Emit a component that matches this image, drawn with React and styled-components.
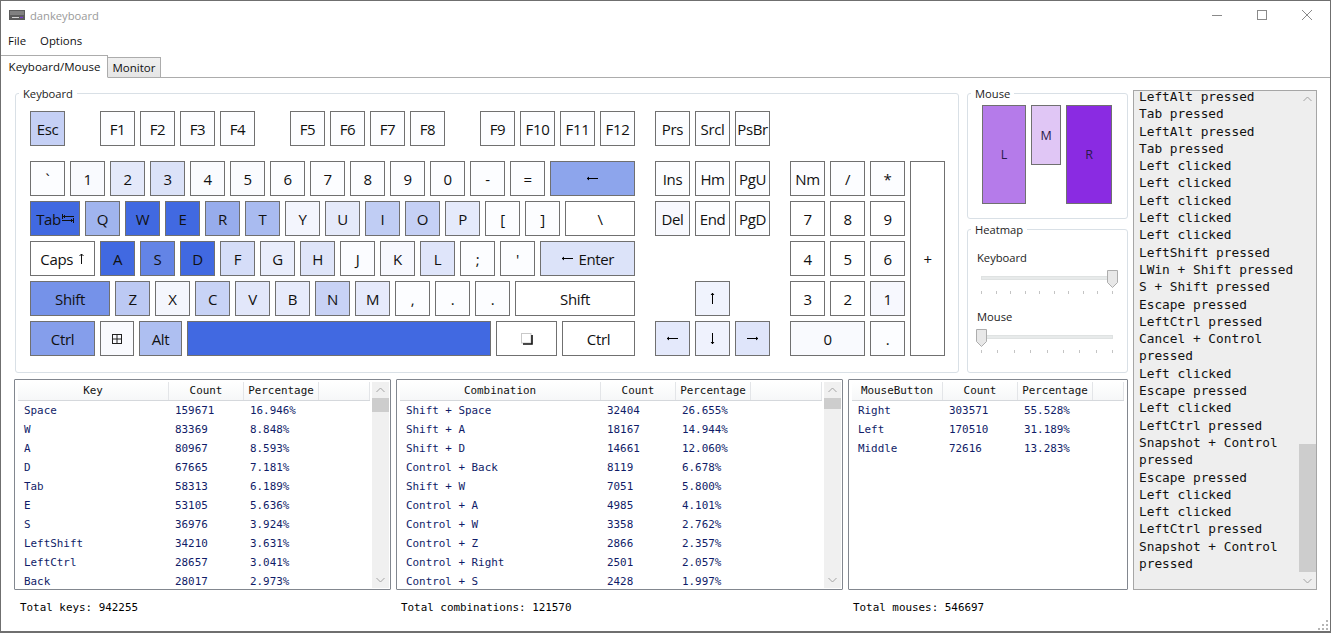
import React from 'react';
import styled, { createGlobalStyle } from 'styled-components';

const UI = '"Open Sans", "DejaVu Sans", sans-serif';
const MONO = '"DejaVu Sans Mono", "Liberation Mono", monospace';

const Global = createGlobalStyle`
  html, body { margin: 0; padding: 0; background: #fff; overflow: hidden; }
  * { box-sizing: border-box; }
`;

const Window = styled.div`
  width: 1331px; height: 633px; background: #fff; position: relative; overflow: hidden;
  border: 1px solid #6f6f6f; border-bottom-width: 2px;
  font-family: ${UI}; color: #111; display: flex; flex-direction: column;
`;
const TitleBar = styled.div`
  height: 29px; flex: none; display: flex; align-items: center; padding: 0 0 1px 8px; gap: 5px;
`;
const Title = styled.span`font-size: 11.2px; color: #9a9a9a;`;
const WinButtons = styled.div`margin-left: auto; display: flex; gap: 35px; padding: 0 18px 1px 0; align-items: center;`;
const MenuBar = styled.div`height: 25px; flex: none; display: flex; gap: 14px; padding: 0 0 5px 7px; align-items: center; font-size: 11.4px;`;
const TabStrip = styled.div`height: 23px; flex: none; display: flex; align-items: flex-end; border-bottom: 1px solid #acacac; padding-left: 0;`;
const Tab = styled.div`
  display: flex; align-items: center; justify-content: center; font-size: 11.5px;
  border: 1px solid #acacac; border-bottom: ${p => p.$active ? '1px solid #fff' : '0'};
  border-left: 0;
  height: ${p => p.$active ? '23px' : '20px'};
  width: ${p => p.$active ? '107px' : '53px'};
  padding-left: ${p => p.$active ? '1px' : '0'};
  background: ${p => p.$active ? '#fff' : 'linear-gradient(#f0f0f0,#e5e5e5)'};
  margin-bottom: ${p => p.$active ? '-1px' : '0'};
`;
const Content = styled.div`flex: 1; display: flex; gap: 5px; padding: 12px 0 0 13px; min-height: 0;`;
const LeftCol = styled.div`width: 1114px; display: flex; flex-direction: column;`;
const TopRow = styled.div`display: flex; gap: 8px; padding: 3px 0 0 1px; height: 289px;`;

const Group = styled.div`
  position: relative; border: 1px solid #d9e0e6; border-radius: 3px;
  width: ${p => p.$w}px; height: ${p => p.$h}px; padding: ${p => p.$pad};
`;
const Legend = styled.span`
  position: absolute; left: 3px; top: -8px; background: #fff; padding: 0 4px; font-size: 11.2px; line-height: 15px; color: #222;
`;
const SideCol = styled.div`display: flex; flex-direction: column; gap: 10px;`;

const KeyboardBody = styled.div`display: flex; gap: 20px;`;
const KeyBlock = styled.div`display: flex; flex-direction: column; gap: 5px;`;
const KeyRow = styled.div`display: flex; gap: 5px; height: 35px; margin-bottom: ${p => p.$mb || 0}px;`;
const Key = styled.div`
  width: ${p => p.$w || 35}px; height: 35px; flex: none; margin-left: ${p => p.$ml || 0}px;
  background: ${p => p.$bg || '#fcfdff'}; border: 1px solid #707070;
  display: flex; align-items: center; justify-content: center; white-space: nowrap;
  font-size: 15px; letter-spacing: -0.35px; color: #111; gap: 1px;
`;
const Numpad = styled.div`
  margin-top: 50px; display: grid; grid-template-columns: repeat(4, 35px); grid-auto-rows: 35px; gap: 5px;
`;
const PadKey = styled(Key)`
  width: auto; height: auto; margin: 0;
  grid-column: span ${p => p.$cs || 1}; grid-row: span ${p => p.$rs || 1};
`;

const MouseRow = styled.div`display: flex; gap: 5px; align-items: flex-start;`;
const MouseBtn = styled.div`
  width: ${p => p.$w}px; height: ${p => p.$h}px; background: ${p => p.$bg}; border: 1px solid #707070;
  display: flex; align-items: center; justify-content: center; font-size: 12.5px; color: #2a1a4a;
`;

const SliderBlock = styled.div`display: flex; flex-direction: column;`;
const SliderLabel = styled.div`font-size: 11.2px; line-height: 16px; color: #222;`;
const Track = styled.div`
  position: relative; width: 132px; height: 4px; margin: 10px 0 0 4px; background: #e7eaea; border: 1px solid #dfe2e2;
`;
const Thumb = styled.svg`position: absolute; top: -7px; ${p => p.$end ? 'right: -6px' : 'left: -6px'};`;
const Ticks = styled.div`display: flex; justify-content: space-between; width: 132px; margin: 11px 0 0 4px;`;
const Tick = styled.i`width: 1px; height: 3px; background: #c4c4c4; display: block;`;
const SpacerSlider = styled.div`margin-top: 15px;`;

const TablesRow = styled.div`display: flex; gap: 5px; margin-top: 0; height: 211px;`;
const TableBox = styled.div`
  width: ${p => p.$w}px; height: 211px; flex: none; border: 1px solid #82878f; border-radius: 1px;
  padding: 2px 1px 1px 3px; display: flex; gap: 2px; overflow: hidden;
`;
const TableMain = styled.div`flex: 1; min-width: 0; overflow: hidden; display: flex; flex-direction: column;`;
const HeaderRow = styled.div`
  display: grid; grid-template-columns: ${p => p.$cols}; height: 19px; flex: none; margin-right: ${p => p.$mr || 0}px;
  border-bottom: 1px solid #d5d8dc; background: linear-gradient(#fff, #f6f7f8);
`;
const HeaderCell = styled.div`
  font-family: ${MONO}; font-size: 10.9px; line-height: 17px; color: #111; text-align: center;
  border-right: 1px solid #e3e5e8;
`;
const Row = styled.div`display: grid; grid-template-columns: ${p => p.$cols}; height: 19px; flex: none;`;
const Cell = styled.div`
  font-family: ${MONO}; font-size: 10.9px; line-height: 19px; color: #101c68; padding-left: 6px; white-space: nowrap;
`;
const ScrollBar = styled.div`
  width: 17px; flex: none; background: ${p => p.$bg || '#f0f0f0'}; display: flex; flex-direction: column; align-items: stretch;
`;
const ScrollArrow = styled.div`height: 16px; flex: none; display: flex; align-items: center; justify-content: center; margin-top: ${p => p.$auto ? 'auto' : '0'};`;
const ScrollThumb = styled.div`height: ${p => p.$h}px; margin-top: ${p => p.$off || 0}px; background: #cdcdcd; flex: none;`;

const Totals = styled.div`display: flex; height: 26px; margin-top: 4px; align-items: center;`;
const Total = styled.div`
  width: ${p => p.$w}px; padding-left: ${p => p.$pl}px; flex: none;
  font-family: ${MONO}; font-size: 10.9px; color: #000;
`;

const LogPanel = styled.div`
  width: 184px; height: 500px; background: #eeeeee; border: 1px solid #a6a6a6; display: flex; overflow: hidden;
`;
const LogText = styled.div`
  flex: 1; min-width: 0; padding: 0 0 0 5px; margin-top: -3px; height: 520px;
  font-family: ${MONO}; font-size: 12.8px; line-height: 17.3px; color: #111;
`;
const LogLine = styled.div``;
const Grip = styled.svg`position: absolute; right: 1px; bottom: 0;`;

const Chevron = ({ up }) => (
  <svg width="9" height="6" viewBox="0 0 9 6"><path d={up ? 'M.5 5 4.5 1l4 4' : 'M.5 1l4 4 4-4'} fill="none" stroke="#a3a3a3" strokeWidth="1" /></svg>
);
const Bar = ({ thumb, off = 0, bg }) => (
  <ScrollBar $bg={bg}>
    <ScrollArrow><Chevron up /></ScrollArrow>
    <ScrollThumb $h={thumb} $off={off} />
    <ScrollArrow $auto><Chevron /></ScrollArrow>
  </ScrollBar>
);

const TabIcon = () => (
  <svg width="12" height="9" viewBox="0 0 12 9" fill="none" stroke="#111" strokeWidth="1">
    <path d="M0 2.5h12M.5 0v5M3 1 1.5 2.5 3 4" />
    <path d="M0 6.5h12M11.5 4v5M9 5l1.5 1.5L9 8" />
  </svg>
);
const CapsArrow = () => (
  <svg width="7" height="11" viewBox="0 0 7 11" fill="none" stroke="#111" strokeWidth="1"><path d="M3.5 11V1M1.5 3l2-2 2 2" /></svg>
);
const Arrow = ({ dir }) => {
  const rot = { l: 0, u: 90, r: 180, d: 270 }[dir];
  return (
    <svg width="13" height="13" viewBox="0 0 13 13" fill="none" stroke="#000" strokeWidth="1">
      <path transform={`rotate(${rot} 6.5 6.5)`} d="M1 6.5h11M3 5 1.2 6.5 3 8" />
    </svg>
  );
};
const WinIcon = () => (
  <svg width="10" height="10" viewBox="0 0 10 10" fill="none" stroke="#222" strokeWidth="1">
    <rect x=".5" y=".5" width="9" height="9" /><path d="M5 0v10M0 5h10" />
  </svg>
);
const MenuIcon = () => (
  <svg width="12" height="12" viewBox="0 0 12 12">
    <rect x=".5" y=".5" width="9.5" height="9.5" fill="#fff" stroke="#c9c9c9" />
    <path d="M11 2v9H2" fill="none" stroke="#111" strokeWidth="1.6" />
  </svg>
);
const KbIcon = () => (
  <svg width="16" height="10" viewBox="0 0 16 10">
    <rect width="16" height="10" fill="#5c5c5c" />
    <path d="M1 2h14M1 4h14" stroke="#b9b9b9" strokeWidth=".8" />
    <path d="M3 7.5h7" stroke="#d5d5d5" strokeWidth="1" />
    <path d="M11 7.5h3" stroke="#7a3fd0" strokeWidth="1.2" />
  </svg>
);

const R = 'royalblue';
const fnRow = [
  ['Esc', 35, '#c5d0f5', 0],
  ['F1', 35, 0, 30], ['F2'], ['F3'], ['F4'],
  ['F5', 35, 0, 30], ['F6'], ['F7'], ['F8'],
  ['F9', 35, 0, 30], ['F10'], ['F11'], ['F12'],
];
const rows = [
  [['`'], ['1', 35, '#f9fafe'], ['2', 35, '#e4e9fa'], ['3', 35, '#dbe2f8'], ['4', 35, '#fafbfe'], ['5', 35, '#fafbfe'], ['6'], ['7'], ['8'], ['9'], ['0'], ['-'], ['='], [<Arrow dir="l" />, 85, '#8da5ec']],
  [[<>Tab<TabIcon /></>, 50, '#4169e1'], ['Q', 35, '#a0b4ee'], ['W', 35, R], ['E', 35, R], ['R', 35, '#97acec'], ['T', 35, '#a9bbf0'], ['Y', 35, '#f3f5fd'], ['U', 35, '#e5eafa'], ['I', 35, '#c0cdf4'], ['O', 35, '#c5d0f5'], ['P', 35, '#e5eafb'], ['['], [']'], ['\\', 70, '#fff']],
  [[<>Caps&nbsp;<CapsArrow /></>, 65, '#fff'], ['A', 35, R], ['S', 35, '#6384e6'], ['D', 35, R], ['F', 35, '#d5ddf8'], ['G', 35, '#e9edfb'], ['H', 35, '#dfe5f9'], ['J', 35, '#fbfcff'], ['K', 35, '#f7f8fe'], ['L', 35, '#dfe5fa'], [';'], ["'"], [<><Arrow dir="l" />&nbsp;Enter</>, 95, '#dce3f9']],
  [['Shift', 80, '#7592e9'], ['Z', 35, '#bcc9f3'], ['X', 35, '#f4f6fd'], ['C', 35, '#c8d3f6'], ['V', 35, '#e2e7fa'], ['B', 35, '#e7ebfb'], ['N', 35, '#c8d2f5'], ['M', 35, '#e6eafb'], [','], ['.'], ['.'], ['Shift', 120, '#fff']],
  [['Ctrl', 65, '#859eeb'], [<WinIcon />, 34, '#f9fafe'], ['Alt', 43, '#aebff1'], ['', 304, R], [<MenuIcon />, 61, '#fff'], ['Ctrl', 73, '#fff']],
];

const renderKeys = list => list.map((k, i) => (
  <Key key={i} $w={k[1]} $bg={k[2] || undefined} $ml={k[3]}>{k[0]}</Key>
));

const padKeys = [
  ['Nm', 1, 1, '#fdfdff'], ['/'], ['*'], ['+', 1, 5, '#fff'],
  ['7', 1, 1, '#fff'], ['8', 1, 1, '#fff'], ['9', 1, 1, '#fff'],
  ['4', 1, 1, '#fff'], ['5', 1, 1, '#fff'], ['6', 1, 1, '#fdfdff'],
  ['3', 1, 1, '#fff'], ['2', 1, 1, '#fff'], ['1', 1, 1, '#f7f8fe'],
  ['0', 2, 1, '#f9fafe'], ['.'],
];

const keyData = [
  ['Space', '159671', '16.946%'], ['W', '83369', '8.848%'], ['A', '80967', '8.593%'], ['D', '67665', '7.181%'],
  ['Tab', '58313', '6.189%'], ['E', '53105', '5.636%'], ['S', '36976', '3.924%'], ['LeftShift', '34210', '3.631%'],
  ['LeftCtrl', '28657', '3.041%'], ['Back', '28017', '2.973%'],
];
const comboData = [
  ['Shift + Space', '32404', '26.655%'], ['Shift + A', '18167', '14.944%'], ['Shift + D', '14661', '12.060%'],
  ['Control + Back', '8119', '6.678%'], ['Shift + W', '7051', '5.800%'], ['Control + A', '4985', '4.101%'],
  ['Control + W', '3358', '2.762%'], ['Control + Z', '2866', '2.357%'], ['Control + Right', '2501', '2.057%'],
  ['Control + S', '2428', '1.997%'],
];
const mouseData = [
  ['Right', '303571', '55.528%'], ['Left', '170510', '31.189%'], ['Middle', '72616', '13.283%'],
];
const logData = [
  'LeftAlt pressed', 'Tab pressed', 'LeftAlt pressed', 'Tab pressed', 'Left clicked', 'Left clicked', 'Left clicked',
  'Left clicked', 'Left clicked', 'LeftShift pressed', 'LWin + Shift pressed', 'S + Shift pressed', 'Escape pressed',
  'LeftCtrl pressed', 'Cancel + Control pressed', 'Left clicked', 'Escape pressed', 'Left clicked', 'LeftCtrl pressed',
  'Snapshot + Control pressed', 'Escape pressed', 'Left clicked', 'Left clicked', 'LeftCtrl pressed',
  'Snapshot + Control pressed',
];

const DataTable = ({ w, cols, heads, data, thumb, fill }) => (
  <TableBox $w={w}>
    <TableMain>
      <HeaderRow $cols={cols + ' 1fr'} $mr={fill}>
        {heads.map(h => <HeaderCell key={h}>{h}</HeaderCell>)}
      </HeaderRow>
      {data.map(r => (
        <Row key={r[0]} $cols={cols}>
          {r.map((c, i) => <Cell key={i}>{c}</Cell>)}
        </Row>
      ))}
    </TableMain>
    {thumb ? <Bar thumb={thumb} /> : null}
  </TableBox>
);

const SliderThumb = ({ end }) => (
  <Thumb $end={end} width="11" height="18" viewBox="0 0 11 18">
    <path d="M.5.5h10v12l-5 5-5-5z" fill="#e8e8e8" stroke="#adadad" />
  </Thumb>
);
const Slider = ({ label, end, ticks }) => (
  <SliderBlock>
    <SliderLabel>{label}</SliderLabel>
    <Track><SliderThumb end={end} /></Track>
    <Ticks>{Array.from({ length: ticks }, (_, i) => <Tick key={i} />)}</Ticks>
  </SliderBlock>
);

export default function App() {
  return (
    <Window>
      <Global />
      <TitleBar>
        <KbIcon />
        <Title>dankeyboard</Title>
        <WinButtons>
          <svg width="10" height="10" viewBox="0 0 10 10"><path d="M0 5.5h10" stroke="#8a8a8a" /></svg>
          <svg width="10" height="10" viewBox="0 0 10 10"><rect x=".5" y=".5" width="9" height="9" fill="none" stroke="#8a8a8a" /></svg>
          <svg width="10" height="10" viewBox="0 0 10 10"><path d="M0 0l10 10M10 0 0 10" stroke="#8a8a8a" /></svg>
        </WinButtons>
      </TitleBar>
      <MenuBar><span>File</span><span>Options</span></MenuBar>
      <TabStrip>
        <Tab $active>Keyboard/Mouse</Tab>
        <Tab>Monitor</Tab>
      </TabStrip>
      <Content>
        <LeftCol>
          <TopRow>
            <Group $w={944} $h={280} $pad="17px 0 0 14px">
              <Legend>Keyboard</Legend>
              <KeyboardBody>
                <KeyBlock>
                  <KeyRow $mb={10}>{renderKeys(fnRow)}</KeyRow>
                  {rows.map((r, i) => <KeyRow key={i}>{renderKeys(r)}</KeyRow>)}
                </KeyBlock>
                <KeyBlock>
                  <KeyRow $mb={10}>{renderKeys([['Prs'], ['Srcl'], ['PsBr']])}</KeyRow>
                  <KeyRow>{renderKeys([['Ins'], ['Hm'], ['PgU']])}</KeyRow>
                  <KeyRow>{renderKeys([['Del', 35, '#f8f9fe'], ['End'], ['PgD']])}</KeyRow>
                  <KeyRow />
                  <KeyRow>{renderKeys([[<Arrow dir="u" />, 35, '#f0f3fd', 40]])}</KeyRow>
                  <KeyRow>{renderKeys([[<Arrow dir="l" />, 35, '#e4e9fb'], [<Arrow dir="d" />, 35, '#eff2fd'], [<Arrow dir="r" />, 35, '#dfe5fa']])}</KeyRow>
                </KeyBlock>
                <Numpad>
                  {padKeys.map((k, i) => <PadKey key={i} $cs={k[1]} $rs={k[2]} $bg={k[3]}>{k[0]}</PadKey>)}
                </Numpad>
              </KeyboardBody>
            </Group>
            <SideCol>
              <Group $w={161} $h={126} $pad="11px 0 0 14px">
                <Legend>Mouse</Legend>
                <MouseRow>
                  <MouseBtn $w={44} $h={99} $bg="#b57bea">L</MouseBtn>
                  <MouseBtn $w={30} $h={60} $bg="#e0c6f5">M</MouseBtn>
                  <MouseBtn $w={46} $h={99} $bg="#8a2be2">R</MouseBtn>
                </MouseRow>
              </Group>
              <Group $w={161} $h={144} $pad="20px 0 0 9px">
                <Legend>Heatmap</Legend>
                <Slider label="Keyboard" end ticks={10} />
                <SpacerSlider><Slider label="Mouse" ticks={9} /></SpacerSlider>
              </Group>
            </SideCol>
          </TopRow>
          <TablesRow>
            <DataTable w={377} cols="151px 75px 75px" heads={['Key', 'Count', 'Percentage', '']} data={keyData} thumb={14} />
            <DataTable w={447} cols="201px 75px 75px" heads={['Combination', 'Count', 'Percentage', '']} data={comboData} thumb={11} />
            <DataTable w={280} cols="91px 75px 75px" heads={['MouseButton', 'Count', 'Percentage', '']} data={mouseData} fill={2} />
          </TablesRow>
          <Totals>
            <Total $w={382} $pl={6}>Total keys: 942255</Total>
            <Total $w={452} $pl={5}>Total combinations: 121570</Total>
            <Total $w={280} $pl={5}>Total mouses: 546697</Total>
          </Totals>
        </LeftCol>
        <LogPanel>
          <LogText>{logData.map((l, i) => <LogLine key={i}>{l}</LogLine>)}</LogText>
          <Bar thumb={128} off={337} bg="#eeeeee" />
        </LogPanel>
      </Content>
      <Grip width="11" height="11" viewBox="0 0 11 11" fill="#b5b5b5">
        <rect x="8" y="0" width="2" height="2" /><rect x="8" y="4" width="2" height="2" /><rect x="4" y="4" width="2" height="2" />
        <rect x="8" y="8" width="2" height="2" /><rect x="4" y="8" width="2" height="2" /><rect x="0" y="8" width="2" height="2" />
      </Grip>
    </Window>
  );
}
